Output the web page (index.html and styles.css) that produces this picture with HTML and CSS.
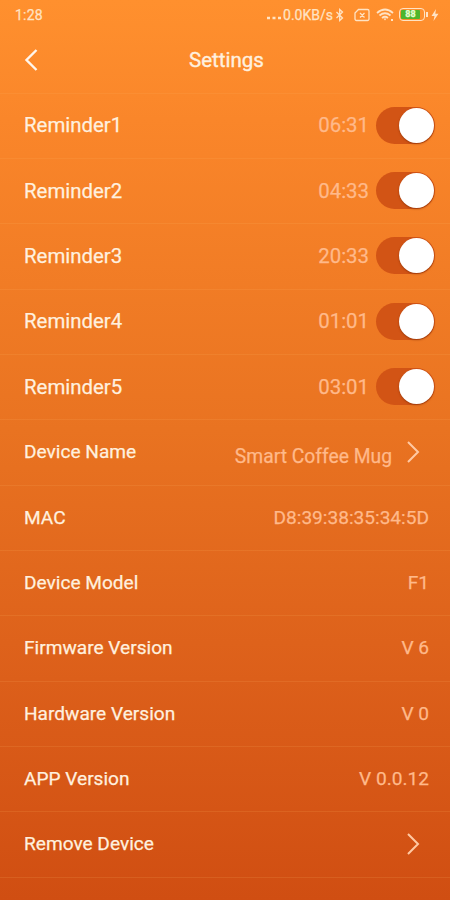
FILE: index.html
```html
<!DOCTYPE html>
<html lang="en">

<head>
    <meta charset="UTF-8">
    <meta name="viewport" content="width=device-width, initial-scale=1.0">
    <title>Settings</title>
    <link rel="stylesheet" href="styles.css">
</head>

<body>
    <!-- Status Bar -->
    <div class="status-bar">
        <span class="clock">1:28</span>
        <div class="status-icons">
            <svg class="dots" width="16" height="12" viewBox="0 0 16 12"><path d="M0 9h3M5.500 9h3M11 9h3"/></svg>
            <span class="speed">0.0KB/s</span>
            <svg class="bluetooth" width="10" height="14" viewBox="0 0 10 14"><path d="M1.5 4l6 6L4.7 12.500V1.500L7.500 4l-6 6"/></svg>
            <svg class="sim" width="16" height="14" viewBox="0 0 16 14"><path d="M4.500 1.500h9a1.500 1.500 0 0 1 1.500 1.500v8a1.500 1.500 0 0 1-1.500 1.500h-11a1.500 1.500 0 0 1-1.500-1.500V5zM6 5l4.500 4.500M10.500 5L6 9.500"/></svg>
            <svg class="wifi" width="18" height="14" viewBox="0 0 18 14"><path d="M1 5q8-7 16 0M3.500 7.500q5.500-4.500 11 0M6 10q3-2.500 6 0"/><path class="solid" d="M7.500 10.500h3L9 12.500zM15 11h2v2h-2z"/></svg>
            <div class="battery"><span>88</span></div>
            <svg class="bolt" width="8" height="12" viewBox="0 0 8 12"><path d="M5 0L.5 7H3.500L2.500 12 7.500 4.800H4.300z"/></svg>
        </div>
    </div>

    <!-- Title Bar -->
    <header class="title-bar">
        <svg class="back" width="15" height="24" viewBox="0 0 15 24"><path d="M12.500 2L2.500 12l10 10"/></svg>
        <h1>Settings</h1>
    </header>

    <!-- Settings List -->
    <ul class="settings">
        <li class="reminder"><span>Reminder1</span><span class="value">06:31</span><span class="switch"></span></li>
        <li class="reminder"><span>Reminder2</span><span class="value">04:33</span><span class="switch"></span></li>
        <li class="reminder"><span>Reminder3</span><span class="value">20:33</span><span class="switch"></span></li>
        <li class="reminder"><span>Reminder4</span><span class="value">01:01</span><span class="switch"></span></li>
        <li class="reminder"><span>Reminder5</span><span class="value">03:01</span><span class="switch"></span></li>
        <li>
            <span>Device Name</span><span class="value device-name">Smart Coffee Mug</span>
            <svg class="arrow" width="15" height="24" viewBox="0 0 15 24"><path d="M2 2l10 10L2 22"/></svg>
        </li>
        <li><span>MAC</span><span class="value">D8:39:38:35:34:5D</span></li>
        <li><span>Device Model</span><span class="value">F1</span></li>
        <li><span>Firmware Version</span><span class="value">V 6</span></li>
        <li><span>Hardware Version</span><span class="value">V 0</span></li>
        <li><span>APP Version</span><span class="value">V 0.0.12</span></li>
        <li>
            <span>Remove Device</span><span class="value"></span>
            <svg class="arrow" width="15" height="24" viewBox="0 0 15 24"><path d="M2 2l10 10L2 22"/></svg>
        </li>
    </ul>
</body>

</html>
```

FILE: styles.css
```css
* {
    box-sizing: border-box;
}
body {
    margin: 0;
    height: 900px;
    overflow: hidden;
    background: linear-gradient(#ff902e 0, #fa862a 120px, #e97321 430px, #dc5f1a 680px, #d04e12 900px);
    color: #fff0df;
    font-family: Roboto, "Liberation Sans", sans-serif;
    -webkit-text-stroke: 0.25px;
}
svg {
    display: block;
    flex: none;
    fill: none;
    stroke: #ffe3c4;
    stroke-width: 1.3;
}
.status-bar {
    display: flex;
    align-items: center;
    justify-content: space-between;
    height: 29px;
    padding: 0 11px 0 15px;
    color: #ffe3c4;
}
.clock {
    font-size: 14px;
    letter-spacing: 0.2px;
}
.status-icons {
    display: flex;
    align-items: center;
}
.speed {
    font-size: 14px;
}
.dots {
    stroke-width: 2.5;
}
.bluetooth {
    margin-left: 2px;
}
.sim {
    margin-left: 9px;
}
.wifi {
    margin-left: 6px;
    stroke-width: 1.7;
}
.wifi .solid,
.bolt {
    fill: #ffe3c4;
    stroke: none;
}
.battery {
    position: relative;
    width: 26px;
    height: 13px;
    margin: 0 6px 0 5px;
    padding: 1px;
    border: 1.5px solid #ffe3c4;
    border-radius: 4px;
}
.battery span {
    display: block;
    width: 19px;
    height: 9px;
    background: #4eb52c;
    border-radius: 1px;
    color: #e8ffd0;
    font-size: 9px;
    font-weight: bold;
    line-height: 9px;
    text-align: center;
}
.battery::after {
    content: "";
    position: absolute;
    top: 3px;
    right: -4px;
    width: 2px;
    height: 5px;
    background: #ffe3c4;
}
.title-bar {
    display: grid;
    grid-template-columns: 40px 1fr 40px;
    align-items: center;
    height: 63.6px;
    padding: 0 20px 0 24px;
}
.title-bar h1 {
    margin: 0;
    padding-right: 1px;
    padding-bottom: 2px;
    font-size: 20.5px;
    font-weight: 400;
    text-align: center;
    -webkit-text-stroke: 0.4px;
}
.back {
    margin-top: -1px;
    stroke: #fff6ec;
    stroke-width: 2.4;
}
.settings {
    margin: 0;
    padding: 0;
    list-style-type: none;
    border-top: 1px solid rgba(255, 180, 100, 0.15);
}
.settings li {
    display: flex;
    align-items: center;
    height: 65.33px;
    padding: 0 21px 1px 24px;
    border-bottom: 1px solid rgba(255, 180, 100, 0.15);
    font-size: 19.1px;
}
.settings .reminder {
    padding-right: 15px;
    font-size: 20.4px;
}
.value {
    margin-left: auto;
    color: #ffb98a;
}
.device-name {
    padding-top: 9px;
    font-size: 19.3px;
}
.arrow {
    margin: 0 8px 0 14px;
    stroke: #ffc9a3;
    stroke-width: 2;
}
.switch {
    display: flex;
    justify-content: flex-end;
    width: 59px;
    height: 37px;
    margin-left: 7px;
    padding: 1px;
    background: #d25415;
    border-radius: 19px;
}
.switch::after {
    content: "";
    width: 35px;
    height: 35px;
    background: #fff;
    border-radius: 50%;
    box-shadow: 0 1px 2px rgba(120, 40, 0, 0.6);
}
```
